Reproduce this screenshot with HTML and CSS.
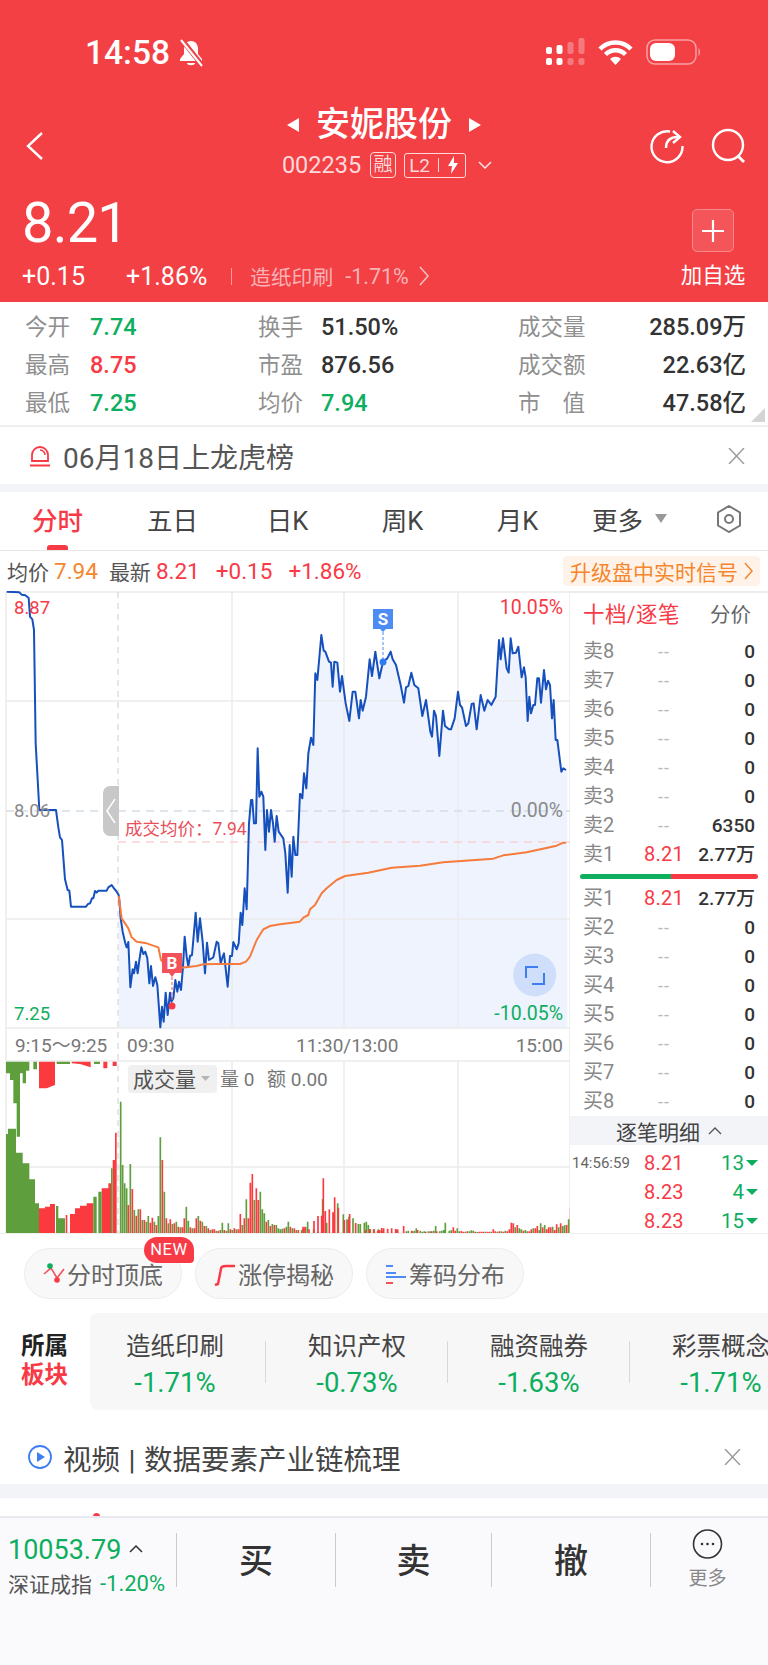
FILE: index.html
```html
<!DOCTYPE html>
<html lang="zh-CN">
  <head>
    <meta charset="utf-8">
    <title>安妮股份</title>
    <link rel="stylesheet" href="styles.css">
  </head>
  <body>
    <div class="page">
      <header class="top">
        <div class="status">
          <span class="clock">14:58</span>
          <svg class="bell" width="26" height="28" viewBox="0 0 26 28"><path d="M13 2c-5 0-7 4-7 8v5l-4 5v2h22v-2l-4-5v-5c0-4-2-8-7-8z" fill="#fff"/><path d="M9 24h8c0 3-8 3-8 0z" fill="#fff"/><path d="M4 1l20 25" stroke="#f24045" stroke-width="5"/><path d="M3 1l21 26" stroke="#fff" stroke-width="2"/></svg>
          <span class="status-right">
            <svg width="40" height="28" viewBox="0 0 40 28"><g fill="#fff"><rect x="1" y="9" width="6" height="7" rx="2"/><rect x="11.500" y="7" width="6" height="9" rx="2"/><rect x="1" y="20" width="6" height="7" rx="2"/><rect x="11.500" y="20" width="6" height="7" rx="2"/></g><g fill="#fff" opacity=".3"><rect x="22.500" y="4" width="6" height="12" rx="2"/><rect x="33.500" y="0" width="6" height="16" rx="2"/><rect x="22.500" y="20" width="6" height="7" rx="2"/><rect x="33.500" y="20" width="6" height="7" rx="2"/></g></svg>
            <svg class="wifi" width="35" height="25" viewBox="0 0 35 25"><path d="M2 9a22 22 0 0 1 31 0M7.500 14.500a14 14 0 0 1 20 0" fill="none" stroke="#fff" stroke-width="4.500"/><path d="M12 19a8 8 0 0 1 11 0l-5.500 6z" fill="#fff"/></svg>
            <svg class="battery" width="55" height="26" viewBox="0 0 55 26"><rect x="1" y="1" width="49" height="24" rx="8" fill="none" stroke="#fff" stroke-opacity=".5" stroke-width="1.500"/><rect x="4" y="4" width="25" height="18" rx="6" fill="#fff"/><path d="M52.500 9c2 1 2 7 0 8z" fill="#fff" fill-opacity=".5"/></svg>
          </span>
        </div>

        <div class="nav">
          <svg class="back" width="18" height="28" viewBox="0 0 18 28"><path d="M16 1L2 14l14 13" fill="none" stroke="#fff" stroke-width="2.400"/></svg>
          <div class="nav-mid">
            <div class="title-row">
              <i class="tri-left"></i>
              <span class="title">安妮股份</span>
              <i class="tri-right"></i>
            </div>
            <div class="code-row">
              <span class="code">002235</span>
              <span class="tag-rong">融</span>
              <span class="tag-l2">L2<i class="tag-sep"></i><svg width="12" height="18" viewBox="0 0 12 18"><path d="M7 0L1 10h4l-1 8 7-11H7z" fill="#fff"/></svg></span>
              <svg class="code-caret" width="14" height="8" viewBox="0 0 14 8"><path d="M1 1l6 6 6-6" fill="none" stroke="#fff" stroke-opacity=".85" stroke-width="1.500"/></svg>
            </div>
          </div>
          <div class="nav-icons">
            <svg width="36" height="36" viewBox="0 0 36 36"><path d="M21 3.500A15.500 15.500 0 1 0 33.500 18" fill="none" stroke="#fff" stroke-width="2.400"/><path d="M17 20c0-7 4-11 12-11" fill="none" stroke="#fff" stroke-width="2.400"/><path d="M24 3l7 6-7 6" fill="none" stroke="#fff" stroke-width="2.400"/></svg>
            <svg width="36" height="36" viewBox="0 0 36 36"><circle cx="17" cy="17" r="15" fill="none" stroke="#fff" stroke-width="2.400"/><path d="M27 28l6 6" stroke="#fff" stroke-width="2.800"/></svg>
          </div>
        </div>

        <div class="quote">
          <div>
            <div class="price">8.21</div>
            <div class="quote-sub">
              <span class="chg">+0.15</span>
              <span class="pct">+1.86%</span>
              <i class="quote-sep"></i>
              <span class="sector-name">造纸印刷</span>
              <span class="sector-pct">-1.71%</span>
              <svg width="11" height="20" viewBox="0 0 11 20"><path d="M1 1l8 9-8 9" fill="none" stroke="#fbc0c2" stroke-width="1.500"/></svg>
            </div>
          </div>
          <div class="add">
            <span class="add-btn"><svg width="22" height="22" viewBox="0 0 22 22"><path d="M11 0v22M0 11h22" stroke="#fff" stroke-width="2.200"/></svg></span>
            <span class="add-text">加自选</span>
          </div>
        </div>
      </header>

      <section class="stats">
        <span class="label">今开</span><span class="val green">7.74</span>
        <span class="label">换手</span><span class="val">51.50%</span>
        <span class="label">成交量</span><span class="val right">285.09万</span>
        <span class="label">最高</span><span class="val red">8.75</span>
        <span class="label">市盈</span><span class="val">876.56</span>
        <span class="label">成交额</span><span class="val right">22.63亿</span>
        <span class="label">最低</span><span class="val green">7.25</span>
        <span class="label">均价</span><span class="val green">7.94</span>
        <span class="label wide"><b>市</b><b>值</b></span><span class="val right">47.58亿</span>
        <i class="corner"></i>
      </section>

      <section class="notice">
        <svg width="22" height="22" viewBox="0 0 22 22"><path d="M3 16V10a8 8 0 0 1 16 0v6zM1 20.500h20" fill="none" stroke="#f83a46" stroke-width="1.800"/><path d="M11 5a5 5 0 0 1 5 5" fill="none" stroke="#f83a46" stroke-width="1.500"/></svg>
        <span class="notice-text">06月18日上龙虎榜</span>
        <svg class="close" width="17" height="16" viewBox="0 0 17 16"><path d="M1 0l15 16M16 0L1 16" stroke="#999" stroke-width="1.400"/></svg>
      </section>
      <div class="band"></div>

      <nav class="tabs">
        <span class="tab active">分时</span>
        <span class="tab">五日</span>
        <span class="tab">日K</span>
        <span class="tab">周K</span>
        <span class="tab">月K</span>
        <span class="tab tab-more">更多<i class="tab-tri"></i></span>
        <span class="tab"><svg width="26" height="28" viewBox="0 0 26 28"><path d="M13 1l11 6.500v13L13 27 2 20.500v-13z" fill="none" stroke="#777" stroke-width="2"/><circle cx="13" cy="14" r="4" fill="none" stroke="#777" stroke-width="2"/></svg></span>
      </nav>

      <div class="info">
        <span class="info-label">均价</span><span class="orange info-num">7.94</span>
        <span class="info-label gap-a">最新</span><span class="red info-num">8.21</span>
        <span class="red info-num gap-b">+0.15</span>
        <span class="red info-num gap-c">+1.86%</span>
        <span class="upgrade">升级盘中实时信号<svg width="9" height="18" viewBox="0 0 9 18"><path d="M1 1l7 8-7 8" fill="none" stroke="#f5862d" stroke-width="1.500"/></svg></span>
      </div>

      <div class="market">
        <svg class="chart" width="570" height="642" viewBox="0 591 570 642">
          <g transform="translate(0 590) scale(.33333)">
            <polygon fill="#eef3fd" points="356,915 358,930 362,985 368,1025 376,1060 380,1072 385,1056 391,1192 398,1138 402,1150 408,1115 413,1150 418,1110 424,1072 430,1092 436,1085 442,1105 448,1180 453,1128 459,1188 466,1162 472,1185 481,1312 486,1250 491,1295 497,1208 503,1275 510,1208 514,1235 520,1225 526,1170 532,1205 537,1175 543,1200 549,1130 554,1040 560,1100 565,1130 570,1098 576,1095 587,968 593,1055 600,985 608,1055 615,1150 621,1058 627,1110 640,1102 650,1055 655,1060 662,1120 668,1100 672,1090 683,1190 690,1098 696,1098 700,1056 710,1078 716,1060 722,968 727,1005 734,895 740,958 747,700 753,630 757,630 762,700 768,700 773,475 778,620 784,605 790,620 796,780 801,660 807,725 813,660 819,700 824,755 830,678 836,725 850,745 856,790 863,908 869,765 875,860 880,740 886,795 892,795 900,610 900,1315 356,1315"/>
            <g transform="translate(840)">
              <polygon fill="#eef3fd" points="60,610 67,625 72,550 79,595 85,490 93,443 100,465 106,250 112,270 124,135 131,182 136,185 147,215 153,218 158,290 163,215 172,218 180,305 186,258 197,340 208,393 218,305 226,305 237,385 242,330 248,362 258,320 269,208 276,258 286,185 298,265 309,215 322,205 332,185 338,208 348,225 362,285 372,338 378,292 385,288 394,248 403,285 415,295 427,378 438,330 451,425 456,440 462,362 468,378 478,498 489,362 495,408 507,418 513,418 524,385 534,305 540,345 546,352 558,408 565,400 575,342 581,340 590,418 602,315 613,362 623,330 634,345 647,320 657,150 662,208 669,145 680,235 686,248 692,145 698,190 708,188 715,170 725,262 732,232 737,262 743,393 748,320 753,370 760,345 765,345 772,265 777,265 783,338 792,240 798,298 804,272 810,285 816,385 821,330 827,450 832,450 844,545 850,535 862,540 862,1315 60,1315"/>
            </g>
          </g>

          <path class="grid" d="M6 592H570M6 701H570M6 919H570M6 1028H570M6 1061H570M6 1167H570M6 1233H570M232 592V1028M344 592V1028M458 592V1028M232 1061V1233M344 1061V1233M458 1061V1233M6 592V1233M570 592V1233"/>
          <path class="dash-v" d="M118 592V1233"/>
          <path class="dash-zero" d="M6 811H570"/>
          <path class="dash-avg" d="M118 842H570"/>

          <g transform="translate(0 590) scale(.33333)">
            <polyline class="price-line" points="20,5 58,7 65,14 76,16 86,24 90,80 97,88 102,120 107,460 118,660 168,660 175,712 180,742 186,750 195,868 203,900 208,902 213,950 258,950 264,942 270,940 276,925 280,925 285,903 290,908 295,902 320,902 325,892 335,885 342,895 350,905 356,915 358,930 362,985 368,1025 376,1060 380,1072 385,1056 391,1192 398,1138 402,1150 408,1115 413,1150 418,1110 424,1072 430,1092 436,1085 442,1105 448,1180 453,1128 459,1188 466,1162 472,1185 481,1312 486,1250 491,1295 497,1208 503,1275 510,1208 514,1235 520,1225 526,1170 532,1205 537,1175 543,1200 549,1130 554,1040 560,1100 565,1130 570,1098 576,1095 587,968 593,1055 600,985 608,1055 615,1150 621,1058 627,1110 640,1102 650,1055 655,1060 662,1120 668,1100 672,1090 683,1190 690,1098 696,1098 700,1056 710,1078 716,1060 722,968 727,1005 734,895 740,958 747,700 753,630 757,630 762,700 768,700 773,475 778,620 784,605 790,620 796,780 801,660 807,725 813,660 819,700 824,755 830,678 836,725 850,745 856,790 863,908 869,765 875,860 880,740 886,795 892,795 900,610"/>
            <polyline class="avg-line" points="356,918 365,985 385,1015 395,1042 410,1055 440,1060 475,1072 483,1110 495,1125 520,1132 545,1133 570,1130 590,1128 610,1123 650,1122 720,1122 738,1115 750,1100 770,1050 790,1018 810,1008 840,1003 900,995"/>
            <g transform="translate(840)">
              <polyline class="price-line" points="60,610 67,625 72,550 79,595 85,490 93,443 100,465 106,250 112,270 124,135 131,182 136,185 147,215 153,218 158,290 163,215 172,218 180,305 186,258 197,340 208,393 218,305 226,305 237,385 242,330 248,362 258,320 269,208 276,258 286,185 298,265 309,215 322,205 332,185 338,208 348,225 362,285 372,338 378,292 385,288 394,248 403,285 415,295 427,378 438,330 451,425 456,440 462,362 468,378 478,498 489,362 495,408 507,418 513,418 524,385 534,305 540,345 546,352 558,408 565,400 575,342 581,340 590,418 602,315 613,362 623,330 634,345 647,320 657,150 662,208 669,145 680,235 686,248 692,145 698,190 708,188 715,170 725,262 732,232 737,262 743,393 748,320 753,370 760,345 765,345 772,265 777,265 783,338 792,240 798,298 804,272 810,285 816,385 821,330 827,450 832,450 844,545 850,535 858,540"/>
              <polyline class="avg-line" points="60,995 70,983 85,975 90,958 105,945 125,910 140,895 170,870 195,858 265,848 335,833 420,827 490,817 640,806 670,796 740,787 830,767 850,758 858,758"/>
            </g>

            <!-- volume, x and y in the same 3x units, baseline at 1930 -->
            <g transform="translate(0 1350)">
              <path fill="#5e9e3c" d="M18 580V282H24V266H48V338H68V370H88V418H105V490H117V580zM168 580V498H175V535H195V580zM18 65H88V92H78V130H68V100H60V290H50V190H40V120H30V100H18zM100 65H111V88H100zM170 65H210V72H170zM282 65H300V72H282z"/>
              <path fill="#fb3a40" d="M117 580V505H135V500H150V492H165V580zM197 580V525H202V580zM210 580V522H225V505H240V497H260V490H280V580zM305 580V445H325V430H333V580zM338 580V360H345V278H350V580zM117 65H165V135L140 145L117 145zM215 65H272V82L240 72L215 70zM310 65H322V85H310zM338 65H350V78H338z"/>
              <path fill="#5e9e3c" d="M280 580V470H290V580zM295 580V455H305V580zM333 580V385H338V580z"/>
              <path class="bar-g" d="M362 580V185M368 580V375M374 580V430M380 580V445M391 580V372M403 580V510M415 580V508M427 580V540M439 580V545M445 580V528M463 580V545M475 580V528M481 580V292M493 580V455M505 580V550M517 580V552M529 580V545M541 580V562M559 580V500M565 580V542M577 580V565M595 580V528M607 580V545M619 580V558M631 580V570M649 580V572M661 580V570M667 580V548M679 580V572M685 580V550M697 580V570M709 580V568M727 580V555M739 580V478M763 580V480M781 580V455M787 580V508M793 580V520M805 580V540M817 580V552M829 580V555M835 580V565M841 580V568M847 580V566M859 580V560M865 580V545M877 580V565M889 580V570"/>
              <path class="bar-r" d="M385 580V495M397 580V447M409 580V527M421 580V508M433 580V540M451 580V548M457 580V533M469 580V555M487 580V360M499 580V535M511 580V538M523 580V550M535 580V560M547 580V562M553 580V535M571 580V562M583 580V565M589 580V535M601 580V542M613 580V558M625 580V565M637 580V568M643 580V568M655 580V572M673 580V570M691 580V568M703 580V565M715 580V568M721 580V522M733 580V535M745 580V535M751 580V428M757 580V402M769 580V445M775 580V480M799 580V545M811 580V558M823 580V555M853 580V565M871 580V560M883 580V565M895 580V570"/>
              <g transform="translate(840)">
                <path class="bar-g" d="M65 580V570M71 580V565M77 580V562M83 580V545M101 580V568M113 580V575M128 580V477M140 580V548M162 580V542M173 580V490M190 580V523M201 580V538M207 580V530M219 580V535M235 580V552M241 580V552M253 580V548M259 580V545M265 580V555M271 580V568M283 580V568M295 580V568M307 580V572M349 580V570M379 580V574M385 580V572M397 580V574M403 580V572M409 580V565M421 580V572M427 580V575M433 580V574M445 580V574M451 580V574M461 580V572M467 580V558M479 580V574M485 580V572M491 580V570M496 580V548M508 580V572M514 580V570M532 580V565M538 580V574M556 580V575M568 580V574M574 580V571M580 580V572M592 580V576M616 580V575M634 580V575M652 580V575M664 580V574M676 580V572M706 580V562M718 580V565M724 580V568M736 580V570M742 580V574M760 580V565M778 580V570M782 580V550M794 580V555M818 580V560M836 580V562M848 580V558M854 580V556M866 580V538M878 580V493M884 580V506M896 580V575"/>
                <path class="bar-r" d="M69 580V560M75 580V560M87 580V568M102 580V543M114 580V528M125 580V527M130 580V415M136 580V513M148 580V508M159 580V517M164 580V472M175 580V503M193 580V540M205 580V540M209 580V522M227 580V549M257 580V570M269 580V567M281 580V568M293 580V572M299 580V570M305 580V564M311 580V565M323 580V566M335 580V565M347 580V567M353 580V568M371 580V558M395 580V572M413 580V570M437 580V575M455 580V574M470 580V574M520 580V562M526 580V572M544 580V573M550 580V575M562 580V574M586 580V575M598 580V575M604 580V575M610 580V575M622 580V575M628 580V575M640 580V568M646 580V574M658 580V574M670 580V575M682 580V574M688 580V568M694 580V548M700 580V550M712 580V555M730 580V572M748 580V574M754 580V568M766 580V565M772 580V558M788 580V562M800 580V568M806 580V562M812 580V562M824 580V570M830 580V553M842 580V550M860 580V555M872 580V503M890 580V467"/>
              </g>
            </g>
          </g>

          <rect x="128" y="1065" width="89" height="28" rx="4" fill="#f0f0f0"/>
          <text class="t-vol" x="133" y="1087">成交量</text>
          <path d="M201 1076h9l-4.500 5z" fill="#b5b5b5"/>
          <text class="t-amt" x="220" y="1086">量 0</text>
          <text class="t-amt" x="267" y="1086">额 0.00</text>

          <text class="t-num red-f" x="14" y="614">8.87</text>
          <text class="t-num gray-f" x="14" y="817">8.06</text>
          <text class="t-num green-f" x="14" y="1020">7.25</text>
          <text class="t-pct red-f" x="563" y="614" text-anchor="end">10.05%</text>
          <text class="t-pct gray-f" x="563" y="817" text-anchor="end">0.00%</text>
          <text class="t-pct green-f" x="563" y="1020" text-anchor="end">-10.05%</text>
          <text class="t-axis" x="15" y="1052">9:15～9:25</text>
          <text class="t-axis" x="127" y="1052">09:30</text>
          <text class="t-axis" x="296" y="1052">11:30/13:00</text>
          <text class="t-axis" x="563" y="1052" text-anchor="end">15:00</text>
          <text class="t-avg" x="125" y="835">成交均价：7.94</text>

          <path d="M119 786h-9a7 7 0 0 0-7 7v36a7 7 0 0 0 7 7h9z" fill="#c8c8c8"/>
          <path d="M115 799l-8 12 8 12" fill="none" stroke="#fff" stroke-width="1.500"/>

          <path d="M172 977V1006" stroke="#f4525a" stroke-dasharray="3 2"/>
          <circle cx="172" cy="1006" r="3.500" fill="#f83a46"/>
          <path d="M162 953h20v20h-7l-3 4-3-4h-7z" fill="#f4525a"/>
          <text class="t-mark" x="172" y="969" text-anchor="middle">B</text>

          <path d="M383 632V662" stroke="#4d8bf5" stroke-dasharray="3 2"/>
          <circle cx="383" cy="662" r="3.500" fill="#2f7bf5"/>
          <path d="M373 609h20v20h-7l-3 3-3-3h-7z" fill="#4d8bf5"/>
          <text class="t-mark" x="383" y="625" text-anchor="middle">S</text>

          <circle cx="534.700" cy="975" r="21.500" fill="#cfdefb"/>
          <path d="M526 978V967H538M532 984H544V973" fill="none" stroke="#3d7ff0" stroke-width="2"/>
        </svg>

        <aside class="book">
          <div class="book-head"><span class="book-active">十档/逐笔</span><span class="book-other">分价</span></div>
          <div class="book-row"><span>卖8</span><em>--</em><b>0</b></div>
          <div class="book-row"><span>卖7</span><em>--</em><b>0</b></div>
          <div class="book-row"><span>卖6</span><em>--</em><b>0</b></div>
          <div class="book-row"><span>卖5</span><em>--</em><b>0</b></div>
          <div class="book-row"><span>卖4</span><em>--</em><b>0</b></div>
          <div class="book-row"><span>卖3</span><em>--</em><b>0</b></div>
          <div class="book-row"><span>卖2</span><em>--</em><b>6350</b></div>
          <div class="book-row"><span>卖1</span><em class="hit">8.21</em><b>2.77万</b></div>
          <div class="ratio"><i class="ratio-buy"></i><i class="ratio-sell"></i></div>
          <div class="book-row"><span>买1</span><em class="hit">8.21</em><b>2.77万</b></div>
          <div class="book-row"><span>买2</span><em>--</em><b>0</b></div>
          <div class="book-row"><span>买3</span><em>--</em><b>0</b></div>
          <div class="book-row"><span>买4</span><em>--</em><b>0</b></div>
          <div class="book-row"><span>买5</span><em>--</em><b>0</b></div>
          <div class="book-row"><span>买6</span><em>--</em><b>0</b></div>
          <div class="book-row"><span>买7</span><em>--</em><b>0</b></div>
          <div class="book-row"><span>买8</span><em>--</em><b>0</b></div>
          <div class="ticks-head">逐笔明细<svg width="14" height="8" viewBox="0 0 14 8"><path d="M1 7l6-6 6 6" fill="none" stroke="#555" stroke-width="1.400"/></svg></div>
          <div class="tick"><span class="tick-time">14:56:59</span><em class="hit">8.21</em><b>13<i></i></b></div>
          <div class="tick"><span class="tick-time"></span><em class="hit">8.23</em><b>4<i></i></b></div>
          <div class="tick"><span class="tick-time"></span><em class="hit">8.23</em><b>15<i></i></b></div>
        </aside>
      </div>

      <div class="chips">
        <span class="chip">
          <svg width="22" height="26" viewBox="0 0 22 26"><path d="M1 13l7-6 6 10 7-9" fill="none" stroke="#f4525a" stroke-width="1.600"/><circle cx="7" cy="5" r="2.800" fill="#0dae5e"/><circle cx="14" cy="19" r="2.800" fill="#f83a46"/></svg>分时顶底
          <span class="badge">NEW</span>
        </span>
        <span class="chip">
          <svg width="22" height="26" viewBox="0 0 22 26"><path d="M1 24l3-1 3-15c0-3 3-3 5-3h9" fill="none" stroke="#f83a46" stroke-width="2.400"/></svg>涨停揭秘
        </span>
        <span class="chip">
          <svg width="22" height="26" viewBox="0 0 22 26"><path d="M1 5h7M1 12h10" stroke="#4d8bf5" stroke-width="2"/><path d="M1 16h20" stroke="#4d8bf5" stroke-width="2"/><path d="M1 22h7" stroke="#f4525a" stroke-width="2"/></svg>筹码分布
        </span>
      </div>

      <section class="sectors">
        <div class="sectors-label"><span>所属</span><span class="red">板块</span></div>
        <div class="sectors-panel">
          <div class="sectors-list">
            <div class="sector"><span>造纸印刷</span><b class="green">-1.71%</b></div>
            <div class="sector"><span>知识产权</span><b class="green">-0.73%</b></div>
            <div class="sector"><span>融资融券</span><b class="green">-1.63%</b></div>
            <div class="sector"><span>彩票概念</span><b class="green">-1.71%</b></div>
          </div>
        </div>
      </section>

      <section class="video">
        <svg width="24" height="24" viewBox="0 0 24 24"><circle cx="12" cy="12" r="11" fill="none" stroke="#3d7ff0" stroke-width="1.800"/><path d="M9 7l8 5-8 5z" fill="#3d7ff0"/></svg>
        <span class="video-text">视频 | 数据要素产业链梳理</span>
        <svg class="close" width="17" height="16" viewBox="0 0 17 16"><path d="M1 0l15 16M16 0L1 16" stroke="#999" stroke-width="1.400"/></svg>
      </section>
      <div class="band band-low"></div>
      <div class="strip"><i class="strip-dot"></i></div>

      <footer class="foot">
        <div class="index">
          <div class="index-top"><span class="green">10053.79</span><svg width="14" height="8" viewBox="0 0 14 8"><path d="M1 7l6-6 6 6" fill="none" stroke="#333" stroke-width="1.500"/></svg></div>
          <div class="index-sub"><span>深证成指</span><span class="green index-pct">-1.20%</span></div>
        </div>
        <div class="act">买</div>
        <div class="act">卖</div>
        <div class="act">撤</div>
        <div class="act more">
          <svg width="31" height="30" viewBox="0 0 31 30"><circle cx="15.500" cy="15" r="14" fill="none" stroke="#333" stroke-width="1.600"/><g fill="#333"><circle cx="10" cy="15" r="1.300"/><circle cx="15.500" cy="15" r="1.300"/><circle cx="21" cy="15" r="1.300"/></g></svg>
          <span>更多</span>
        </div>
      </footer>
    </div>
  </body>
</html>
```

FILE: styles.css
```css
* {
  box-sizing: border-box;
}
body {
  margin: 0;
  background: white;
  font-family: Roboto, "Noto Sans CJK SC", sans-serif;
  color: #333;
}
i, em, b {
  font-style: normal;
}
svg {
  display: block;
  flex: none;
}
.page {
  width: 768px;
  height: 1665px;
  overflow: hidden;
  display: flex;
  flex-direction: column;
  position: relative;
}
.red { color: #f83a46; }
.green { color: #0dae5e; }
.orange { color: #f5862d; }

/* header */
.top {
  height: 302px;
  flex: none;
  background: #f24045;
  color: white;
}
.status {
  height: 104px;
  display: flex;
  align-items: center;
  padding-left: 85px;
}
.clock {
  font-size: 33.500px;
  font-weight: 500;
  width: 93px;
}
.bell {
  margin-top: 1px;
}
.status-right {
  margin-left: auto;
  display: flex;
  align-items: center;
  margin-right: 67px;
}
.wifi {
  margin-left: 13px;
}
.battery {
  margin-left: 13px;
}
.nav {
  height: 74px;
  display: grid;
  grid-template-columns: 118px 1fr 118px;
}
.back {
  margin: 28px 0 0 26px;
}
.nav-mid {
  display: flex;
  flex-direction: column;
  align-items: center;
}
.title-row {
  height: 38px;
  padding-top: 3px;
  display: flex;
  align-items: center;
}
.title {
  font-size: 34px;
  font-weight: 500;
  line-height: 35px;
  margin: 0 17px;
}
.tri-left, .tri-right {
  width: 0;
  height: 0;
  border-top: 7px solid transparent;
  border-bottom: 7px solid transparent;
}
.tri-left { border-right: 12px solid white; }
.tri-right { border-left: 12px solid white; }
.code-row {
  margin-top: 10px;
  height: 26px;
  display: flex;
  align-items: center;
  margin-left: 6px;
}
.code {
  font-size: 23.500px;
  color: #fcd9da;
}
.tag-rong {
  margin-left: 9px;
  width: 26px;
  height: 26px;
  border: 1px solid #fcd9da;
  border-radius: 4px;
  font-size: 19px;
  line-height: 24px;
  text-align: center;
  color: #fcd9da;
}
.tag-l2 {
  margin-left: 8px;
  width: 62px;
  height: 25px;
  border: 1px solid #fcd9da;
  border-radius: 3px;
  font-size: 19px;
  display: flex;
  align-items: center;
  padding-left: 4px;
  color: #fcd9da;
}
.tag-sep {
  width: 1px;
  height: 14px;
  background: #fcd9da;
  margin: 0 8px 0 8px;
}
.code-caret {
  margin-left: 12px;
}
.nav-icons {
  display: flex;
  gap: 26px;
  padding: 24px 0 0 0;
  justify-content: flex-start;
  margin-left: -1px;
}
.quote {
  height: 124px;
  display: flex;
  justify-content: space-between;
  padding-left: 22px;
}
.price {
  margin-top: 20px;
  font-size: 56px;
  line-height: 50px;
  letter-spacing: -0.800px;
}
.quote-sub {
  margin-top: 16px;
  height: 24px;
  display: flex;
  align-items: center;
}
.chg {
  font-size: 25px;
  width: 104px;
}
.pct {
  font-size: 25px;
  width: 105px;
}
.quote-sep {
  width: 1px;
  height: 17px;
  background: #f99;
}
.sector-name {
  margin-left: 18px;
  font-size: 20.800px;
  color: #f9b3b5;
}
.sector-pct {
  margin-left: 12px;
  font-size: 21.500px;
  color: #f9b3b5;
  width: 74px;
}
.add {
  width: 64px;
  margin-right: 23px;
  display: flex;
  flex-direction: column;
  align-items: center;
}
.add-btn {
  margin-top: 31px;
  width: 42px;
  height: 43px;
  border: 1px solid #f98b8e;
  border-radius: 5px;
  background: #f45559;
  display: flex;
  align-items: center;
  justify-content: center;
}
.add-text {
  margin-top: 12px;
  font-size: 21.500px;
  line-height: 24px;
  white-space: nowrap;
}

/* stats */
.stats {
  height: 125px;
  flex: none;
  position: relative;
  display: grid;
  grid-template-columns: 65px 168px 63px 197px 80px 148px;
  grid-auto-rows: 38px;
  padding: 6px 22px 0 25px;
  border-bottom: 2px solid #efefef;
}
.label {
  font-size: 22.500px;
  line-height: 38px;
  color: #8f8f8f;
  white-space: nowrap;
}
.label.wide {
  width: 67px;
  display: flex;
  justify-content: space-between;
}
.label b {
  font-weight: 400;
}
.val {
  font-size: 23.500px;
  line-height: 38px;
  font-weight: 500;
  white-space: nowrap;
}
.val.right {
  text-align: right;
}
.corner {
  position: absolute;
  right: 3px;
  bottom: 3px;
  width: 0;
  height: 0;
  border-left: 14px solid transparent;
  border-bottom: 14px solid #d4d4d4;
}

/* notice rows */
.notice {
  height: 57px;
  flex: none;
  display: flex;
  align-items: center;
  padding: 0 23px 0 29px;
}
.notice-text {
  margin-left: 12px;
  font-size: 28px;
  color: #555;
}
.close {
  margin-left: auto;
}
.band {
  height: 8px;
  flex: none;
  background: #f3f4f8;
}

/* tabs */
.tabs {
  height: 59px;
  flex: none;
  display: flex;
  border-bottom: 1px solid #e8e8e8;
}
.tab {
  width: 115px;
  position: relative;
  display: flex;
  align-items: center;
  justify-content: center;
  padding-bottom: 5px;
  font-size: 25.500px;
  color: #444;
}
.tab:last-child {
  width: 78px;
}
.tab-more {
  padding-right: 6px;
}
.tab.active {
  color: #f83a46;
  font-weight: 500;
}
.tab.active::after {
  content: "";
  position: absolute;
  left: 47px;
  bottom: 0;
  width: 21px;
  height: 5px;
  border-radius: 3px 3px 0 0;
  background: #f83a46;
}
.tab-tri {
  margin-left: 12px;
  width: 0;
  height: 0;
  border-left: 6px solid transparent;
  border-right: 6px solid transparent;
  border-top: 9px solid #999;
}

/* info row */
.info {
  height: 40px;
  flex: none;
  display: flex;
  align-items: center;
  padding-left: 7px;
  font-size: 21px;
}
.info-label {
  color: #555;
}
.info-num {
  margin-left: 5px;
  font-size: 22.500px;
}
.info-label.gap-a {
  margin-left: 11px;
}
.info-num.gap-b {
  margin-left: 16px;
}
.info-num.gap-c {
  margin-left: 16px;
}
.upgrade {
  margin-left: auto;
  margin-right: 8px;
  width: 197px;
  height: 30px;
  border-radius: 4px;
  background: #fff3e9;
  color: #f5862d;
  display: flex;
  align-items: center;
  justify-content: space-between;
  padding: 0 7px;
  font-size: 21px;
  margin-top: -1px;
  white-space: nowrap;
}

/* chart and order book */
.market {
  height: 642px;
  flex: none;
  display: flex;
}
.grid {
  fill: none;
  stroke: #ececec;
  stroke-width: 1.500;
}
.dash-v {
  fill: none;
  stroke: #d8d8d8;
  stroke-width: 1.200;
  stroke-dasharray: 6 5;
}
.dash-zero {
  fill: none;
  stroke: #d3dde8;
  stroke-width: 1.500;
  stroke-dasharray: 8 6;
}
.dash-avg {
  fill: none;
  stroke: #f9d2d4;
  stroke-width: 1.500;
  stroke-dasharray: 8 6;
}
.price-line {
  fill: none;
  stroke: #1650bd;
  stroke-width: 6;
  stroke-linejoin: round;
}
.avg-line {
  fill: none;
  stroke: #f67b3c;
  stroke-width: 6;
  stroke-linejoin: round;
}
.bar-g, .bar-r {
  fill: none;
  stroke-width: 5;
}
.bar-g { stroke: #5e9e3c; }
.bar-r { stroke: #fb3a40; }
.t-num {
  font-size: 18.500px;
}
.t-pct {
  font-size: 19.500px;
}
.red-f { fill: #f83a46; }
.gray-f { fill: #8a8a8a; }
.green-f { fill: #0dae5e; }
.t-axis {
  font-size: 19px;
  fill: #777;
}
.t-avg {
  font-size: 17.500px;
  fill: #e8505b;
}
.t-vol {
  font-size: 21px;
  fill: #555;
}
.t-amt {
  font-size: 19px;
  fill: #777;
}
.t-mark {
  font-size: 17px;
  font-weight: 700;
  fill: white;
}
.book {
  width: 198px;
  padding-top: 1px;
  border-top: 2px solid #ececec;
  overflow: hidden;
}
.book-head {
  height: 43px;
  padding: 0 17px 6px 13px;
  display: flex;
  align-items: center;
  justify-content: space-between;
}
.book-active {
  color: #f83a46;
  font-size: 21.500px;
  letter-spacing: 0.400px;
}
.book-other {
  font-size: 20.500px;
  color: #666;
}
.book-row {
  height: 29px;
  padding: 0 13px;
  display: grid;
  grid-template-columns: 48px 66px 1fr;
  align-items: center;
  font-size: 20px;
  line-height: 29px;
}
.book-row span {
  color: #888;
}
.book-row em {
  text-align: center;
  color: #bbb;
  letter-spacing: 1px;
  font-size: 18px;
}
.book-row em.hit, .tick em.hit {
  color: #f83a46;
  font-size: 20px;
  letter-spacing: 0.200px;
}
.book-row b {
  font-weight: 500;
  justify-self: end;
  white-space: nowrap;
  font-size: 19px;
}
.ratio {
  margin: 5px 10px 5px 10px;
  height: 5px;
  display: flex;
  border-radius: 3px;
  overflow: hidden;
}
.ratio-buy {
  width: 91px;
  background: #0dae5e;
}
.ratio-sell {
  flex: 1;
  background: #f83a46;
}
.ticks-head {
  height: 29px;
  background: #f3f4f8;
  display: flex;
  align-items: center;
  justify-content: center;
  gap: 8px;
  font-size: 21px;
  color: #444;
}
.tick {
  height: 29px;
  padding: 0 10px 0 2px;
  display: grid;
  grid-template-columns: 72px 40px 1fr;
  align-items: center;
  font-size: 20px;
}
.tick:nth-child(n) {
  position: relative;
  top: 3px;
}
.tick-time {
  font-size: 15px;
  color: #666;
}
.tick b {
  font-weight: 400;
  font-size: 20.500px;
  color: #0dae5e;
  display: flex;
  align-items: center;
  justify-content: flex-end;
}
.tick b i {
  margin-left: 2px;
  width: 0;
  height: 0;
  border-left: 6.500px solid transparent;
  border-right: 6.500px solid transparent;
  border-top: 6px solid #0dae5e;
}

/* chips */
.chips {
  height: 80px;
  flex: none;
  display: flex;
  padding: 14px 0 0 24px;
  gap: 13px;
  border-top: 1px solid #efefef;
}
.chip {
  position: relative;
  width: 158px;
  height: 51px;
  border: 1px solid #ececec;
  border-radius: 26px;
  background: #f8f8f8;
  display: flex;
  align-items: center;
  padding-left: 18px;
  gap: 2px;
  font-size: 24px;
  color: #666;
}
.badge {
  position: absolute;
  left: 119px;
  top: -12px;
  width: 50px;
  height: 26px;
  border-radius: 13px 13px 4px 13px;
  background: #f83a46;
  color: white;
  font-size: 16.500px;
  line-height: 26px;
  text-align: center;
  letter-spacing: 0.500px;
}

/* sectors */
.sectors {
  height: 97px;
  flex: none;
  display: flex;
}
.sectors-label {
  width: 90px;
  padding: 19px 0 0 21px;
  display: flex;
  flex-direction: column;
  font-size: 23.500px;
  line-height: 29px;
  font-weight: 700;
  color: #222;
}
.sectors-panel {
  flex: 1;
  background: #f7f7f7;
  border-radius: 8px 0 0 8px;
  overflow: hidden;
}
.sectors-list {
  display: flex;
  margin-left: -6px;
  width: 728px;
}
.sector {
  flex: 0 0 182px;
  position: relative;
  display: flex;
  flex-direction: column;
  align-items: center;
  padding-top: 17px;
}
.sector span {
  font-size: 24.500px;
  line-height: 34px;
  color: #444;
  white-space: nowrap;
}
.sector b {
  margin-top: 2px;
  font-weight: 400;
  font-size: 27.500px;
  line-height: 34px;
}
.sector::after {
  content: "";
  position: absolute;
  right: 0;
  top: 28px;
  width: 1px;
  height: 42px;
  background: #d8d8d8;
}
.sector:last-child::after {
  display: none;
}

/* video row */
.video {
  height: 74px;
  flex: none;
  display: flex;
  align-items: center;
  padding: 20px 27px 0 28px;
}
.video-text {
  margin-left: 11px;
  font-size: 28.500px;
  word-spacing: 1.500px;
  color: #444;
}
.band-low {
  height: 14px;
}
.strip {
  height: 18px;
  flex: none;
  position: relative;
}
.strip-dot {
  position: absolute;
  left: 93px;
  bottom: -4px;
  width: 7px;
  height: 7px;
  border-radius: 50%;
  background: #f83a46;
}

/* footer */
.foot {
  flex: 1;
  position: relative;
  display: grid;
  grid-template-columns: 176px 159px 156px 159px 118px;
  padding-top: 15px;
  grid-template-rows: 54px;
  background: #fafafc;
  border-top: 2px solid #e8e8ee;
}
.index {
  padding-left: 8px;
  white-space: nowrap;
}
.index-top {
  height: 34px;
  display: flex;
  align-items: center;
  font-size: 27px;
}
.index-top svg {
  margin-left: 8px;
  margin-top: -2px;
}
.index-sub {
  margin-top: 3px;
  height: 26px;
  display: flex;
  align-items: center;
  font-size: 21px;
  color: #555;
}
.index-pct {
  margin-left: 8px;
  font-size: 22px;
}
.act {
  border-left: 1px solid #ccc;
  display: flex;
  align-items: center;
  justify-content: center;
  font-size: 34px;
  font-weight: 500;
  padding-bottom: 4px;
}
.more {
  flex-direction: column;
  justify-content: flex-start;
  font-size: 19px;
  font-weight: 400;
  color: #888;
  padding: 0;
}
.more svg {
  margin-top: -4px;
  margin-left: -4px;
}
.more span {
  margin-top: 7px;
  margin-left: -4px;
  line-height: 26px;
}
```
